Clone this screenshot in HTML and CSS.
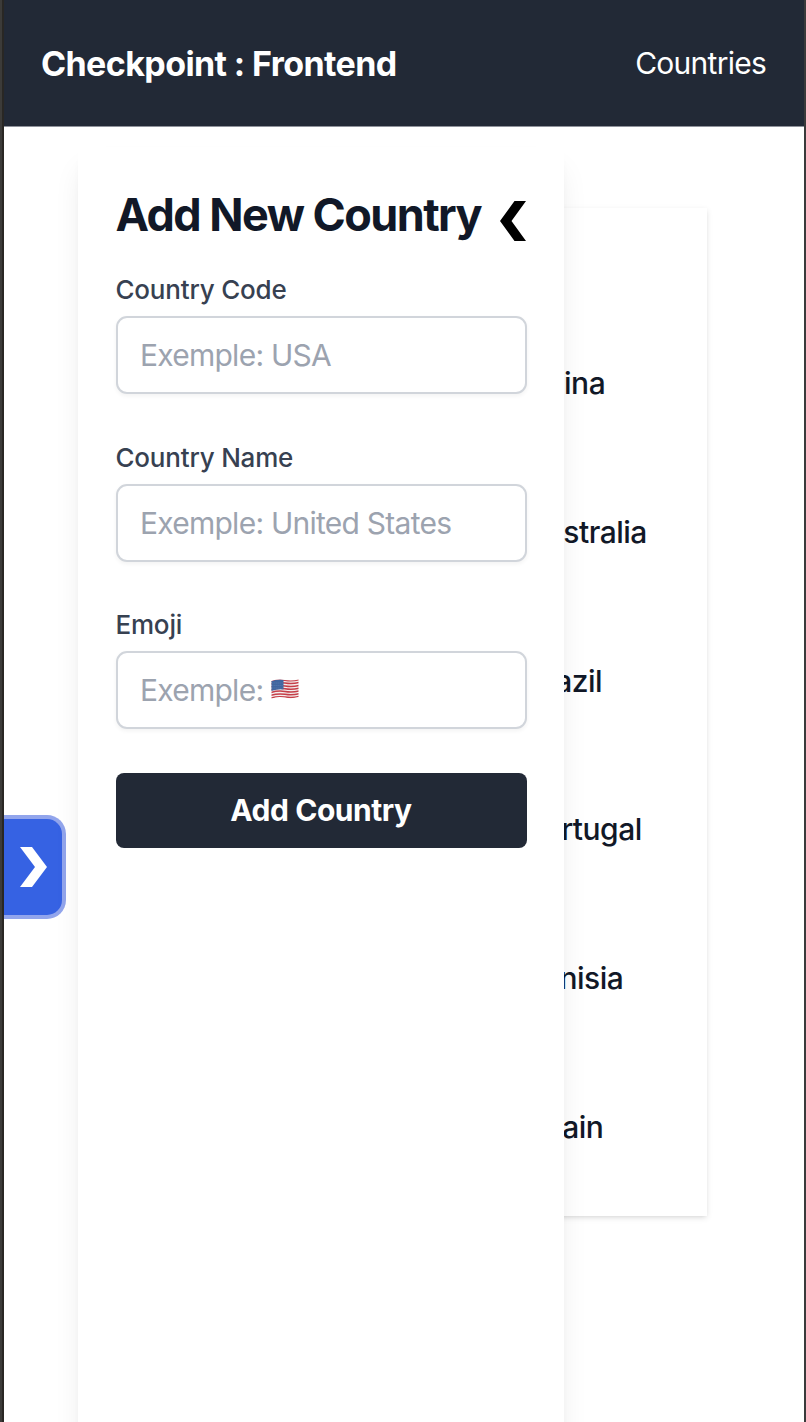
FILE: index.html
```html
<!DOCTYPE html>
<html lang="en">
<head>
<meta charset="utf-8">
<title>Checkpoint : Frontend</title>
<link rel="stylesheet" href="styles.css">
</head>
<body>
<div class="window">
  <div class="page">
    <header class="header">
      <h1 class="brand">Checkpoint : Frontend</h1>
      <a class="nav-link">Countries</a>
    </header>
    <main class="main">
      <ul class="countries">
        <li class="country">China</li>
        <li class="country">Australia</li>
        <li class="country">Brazil</li>
        <li class="country">Portugal</li>
        <li class="country">Tunisia</li>
        <li class="country">Spain</li>
      </ul>
      <button class="toggle" aria-label="Open">
        <svg width="27" height="40" viewBox="0 0 27 40"><path d="M0 0H12L27 20L12 40H0L15 20Z" fill="#fff"/></svg>
      </button>
      <aside class="drawer">
        <div class="drawer-head">
          <h2 class="title">Add New Country</h2>
          <svg class="close" width="26" height="40" viewBox="0 0 26 40"><path d="M26 0H14.5L0 20L14.5 40H26L11.5 20Z" fill="#000"/></svg>
        </div>
        <form class="form">
          <div class="field">
            <label class="label">Country Code</label>
            <input class="input" placeholder="Exemple: USA">
          </div>
          <div class="field">
            <label class="label">Country Name</label>
            <input class="input" placeholder="Exemple: United States">
          </div>
          <div class="field">
            <label class="label">Emoji</label>
            <input class="input" placeholder="Exemple:">
            <svg class="flag" width="28" height="22" viewBox="0 0 28 22">
              <defs><clipPath id="wave"><path d="M.5 3Q7 .8 14 2T27.5 1.5V19Q21 21 14 19.500T.5 20.500Z"/></clipPath></defs>
              <g clip-path="url(#wave)">
                <rect width="28" height="22" fill="#f3eeee"/>
                <path d="M0 3.300Q7 1.100 14 2.300T28 1.800M0 6.100Q7 3.900 14 5.100T28 4.600M0 8.900Q7 6.700 14 7.900T28 7.400M0 11.700Q7 9.500 14 10.700T28 10.200M0 14.500Q7 12.300 14 13.500T28 13M0 17.300Q7 15.100 14 16.300T28 15.800M0 20.100Q7 17.900 14 19.100T28 18.600" fill="none" stroke="#c63f49" stroke-width="1.500"/>
                <path d="M0 3Q7 .8 12.500 1.800V11.500Q7 10.800 0 13Z" fill="#40659f"/>
                <path d="M1.500 5H12M1.500 7.500H12M1.500 10H12" stroke="#6c8abb" stroke-width=".7" stroke-dasharray=".8 1.200"/>
              </g>
            </svg>
          </div>
          <button type="button" class="submit">Add Country</button>
        </form>
      </aside>
    </main>
  </div>
</div>
</body>
</html>
```
FILE: styles.css
```css
* { box-sizing: border-box; }
body, h1, h2, ul { margin: 0; padding: 0; }
body { font-family: Inter, "Liberation Sans", sans-serif; background: #fff; }
.window {
  height: 1422px;
  overflow: hidden;
  border-left: 2px solid #3c3b39;
  border-right: 2px solid #3a3a3b;
}
.page { height: 100%; border-left: 2px solid #292724; display: flex; flex-direction: column; }
.header {
  flex: none;
  height: 127px;
  padding: 0 38px 0 37px;
  display: flex;
  align-items: center;
  justify-content: space-between;
  background: #222936;
  border-bottom: 1px solid #8f929b;
  color: #fff;
}
.brand { font-size: 34px; font-weight: 700; letter-spacing: -0.600px; }
.nav-link { font-size: 30px; letter-spacing: -0.750px; }
.main { position: relative; flex: 1; padding: 81px 97px 0 93px; }
.countries {
  list-style: none;
  height: 1008px;
  padding: 101px 0 0 428px;
  background: #fff;
  box-shadow: 0 2px 6px rgba(0,0,0,.1), 0 2px 4px -2px rgba(0,0,0,.1);
}
.country {
  height: 148.800px;
  line-height: 148.800px;
  font-size: 30px;
  font-weight: 500;
  letter-spacing: -0.500px;
  color: #111827;
}
.toggle {
  position: absolute;
  left: 0;
  top: 688px;
  width: 62px;
  height: 104px;
  padding: 0 0 0 16px;
  display: flex;
  align-items: center;
  border: 4px solid #92a5ec;
  border-left: 0;
  border-radius: 0 19px 19px 0;
  background: #3662e3;
}
.drawer {
  position: absolute;
  left: 74px;
  top: 20px;
  width: 486px;
  height: 1500px;
  padding: 39px 37.500px;
  background: #fff;
  box-shadow: 0 19px 28px -6px rgba(0,0,0,.1), 0 7px 11px -7px rgba(0,0,0,.1);
}
.drawer-head { display: flex; align-items: flex-start; justify-content: space-between; height: 62px; }
.title { font-size: 45px; line-height: 58px; font-weight: 700; letter-spacing: -1.550px; color: #111827; white-space: nowrap; }
.close { flex: none; margin: 15px 1px 0 0; }
.form { display: flex; flex-direction: column; margin-top: 22px; }
.field { position: relative; display: flex; flex-direction: column; height: 167.500px; }
.label { font-size: 26px; line-height: 40px; font-weight: 500; letter-spacing: -0.200px; color: #374151; margin-bottom: 6px; }
.input {
  width: 411px;
  height: 78px;
  padding: 0 22.500px;
  border: 2px solid #d1d5db;
  border-radius: 11px;
  background: #fff;
  font: 400 30px Inter, "Liberation Sans", sans-serif;
  letter-spacing: -0.750px;
  box-shadow: 0 2px 4px rgba(0,0,0,.05);
}
.input::placeholder { color: #9ca3af; opacity: 1; }
.flag { position: absolute; left: 155.500px; top: 73px; }
.submit {
  height: 75px;
  margin-top: 0;
  border: 0;
  border-radius: 8px;
  background: #222936;
  color: #fff;
  font: 700 30px Inter, "Liberation Sans", sans-serif;
  letter-spacing: -0.450px;
}
```
